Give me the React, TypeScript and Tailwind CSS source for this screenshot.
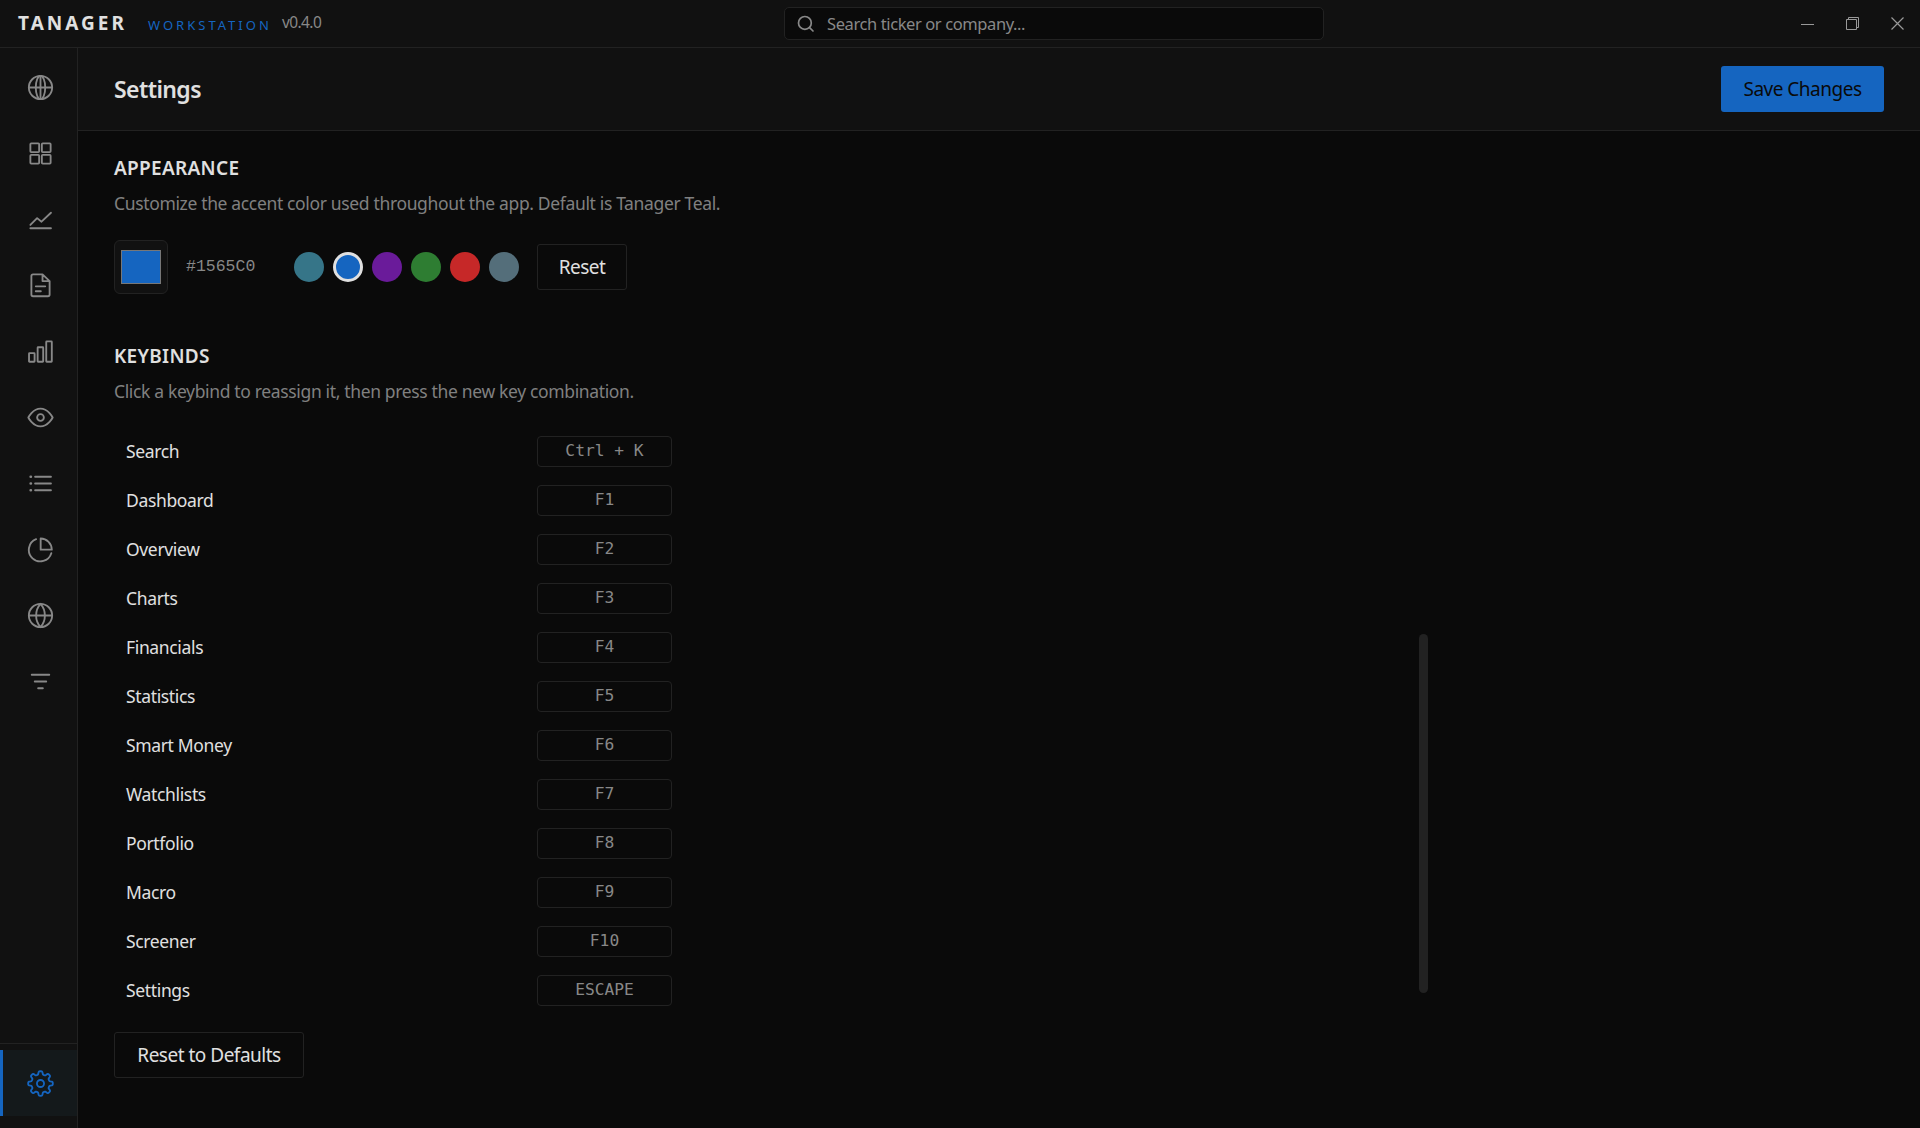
import { useState, type ReactNode } from 'react';

interface Keybind {
    action: string;
    keys: string;
}

const PRESETS = ['#367588', '#1565C0', '#6A1B9A', '#2E7D32', '#C62828', '#546E7A'];

const KEYBINDS: Keybind[] = [
    { action: 'Search', keys: 'Ctrl + K' },
    { action: 'Dashboard', keys: 'F1' },
    { action: 'Overview', keys: 'F2' },
    { action: 'Charts', keys: 'F3' },
    { action: 'Financials', keys: 'F4' },
    { action: 'Statistics', keys: 'F5' },
    { action: 'Smart Money', keys: 'F6' },
    { action: 'Watchlists', keys: 'F7' },
    { action: 'Portfolio', keys: 'F8' },
    { action: 'Macro', keys: 'F9' },
    { action: 'Screener', keys: 'F10' },
    { action: 'Settings', keys: 'ESCAPE' },
];

// Eight-toothed cog outline around (8, 8)
const gearPath = () => {
    const points: string[] = [];
    for (let i = 0; i < 144; i++) {
        const a = (i / 144) * Math.PI * 2;
        const wave = Math.tanh(2.2 * Math.cos(8 * a)) / Math.tanh(2.2);
        const r = 6.35 + 0.95 * wave;
        points.push(`${(8 + r * Math.sin(a)).toFixed(2)} ${(8 - r * Math.cos(a)).toFixed(2)}`);
    }
    return `M${points.join('L')}Z`;
};

const Icon = ({ children }: { children: ReactNode }) => (
    <svg
        viewBox="0 0 16 16"
        className="size-[27px] shrink-0"
        fill="none"
        stroke="currentColor"
        strokeWidth="1.1"
        strokeLinecap="round"
        strokeLinejoin="round"
    >
        {children}
    </svg>
);

const NAV: { id: string; icon: ReactNode }[] = [
    {
        id: 'dashboard',
        icon: (
            <>
                <circle cx="8" cy="8" r="6.9" />
                <ellipse cx="8" cy="8" rx="2.8" ry="6.9" />
                <path d="M8 1.1v13.8M1.1 8h13.8" />
            </>
        ),
    },
    {
        id: 'overview',
        icon: (
            <>
                <rect x="2" y="2" width="5.2" height="5.2" rx="0.5" />
                <rect x="8.8" y="2" width="5.2" height="5.2" rx="0.5" />
                <rect x="2" y="8.8" width="5.2" height="5.2" rx="0.5" />
                <rect x="8.8" y="8.8" width="5.2" height="5.2" rx="0.5" />
            </>
        ),
    },
    { id: 'charts', icon: <path d="M2 11.2l4-4 2.6 2.1L14.2 4M2 13.2h12.2" /> },
    {
        id: 'financials',
        icon: (
            <path d="M9.2 1.4H3.6a1 1 0 0 0-1 1v11a1 1 0 0 0 1 1h8.8a1 1 0 0 0 1-1V5.4zM9.2 1.4v4h4.2M5.2 8.5h5.6M5.2 11.4h3" />
        ),
    },
    {
        id: 'statistics',
        icon: (
            <>
                <rect x="1.2" y="9" width="3.3" height="5.1" rx="0.3" />
                <rect x="6.3" y="5.5" width="3.3" height="8.6" rx="0.3" />
                <rect x="11.4" y="2" width="3.3" height="12.1" rx="0.3" />
            </>
        ),
    },
    {
        id: 'smart-money',
        icon: (
            <>
                <path d="M.8 8S3.3 2.7 8 2.7 15.2 8 15.2 8 12.7 13.3 8 13.3.8 8 .8 8z" />
                <circle cx="8" cy="8" r="2" />
            </>
        ),
    },
    {
        id: 'watchlists',
        icon: (
            <>
                <path d="M4.8 4h9.4M4.8 8h9.4M4.8 12h9.4" />
                <path d="M2.2 4h.1M2.2 8h.1M2.2 12h.1" strokeWidth="1.6" />
            </>
        ),
    },
    {
        id: 'portfolio',
        icon: (
            <>
                <path d="M5.4 1.9A6.8 6.8 0 1 0 14.4 10.2" />
                <path d="M8.1 1.5a6.6 6.6 0 0 1 6.6 6.6H8.1z" />
            </>
        ),
    },
    {
        id: 'macro',
        icon: (
            <>
                <circle cx="8" cy="8" r="6.9" />
                <path d="M1.1 8h13.8M8 1.1c-1.8 2-2.6 4.4-2.6 6.9s.8 4.9 2.6 6.9c1.8-2 2.6-4.4 2.6-6.9S9.8 3.1 8 1.1z" />
            </>
        ),
    },
    { id: 'screener', icon: <path d="M2.8 4h10.4M4.6 8h6.8M6.6 12h2.8" /> },
];

const TitleBar = () => (
    <header className="h-12 shrink-0 flex items-center justify-between bg-[#111111] border-b border-[#222222]">
        <div className="w-[784px] pl-[18px] flex items-baseline">
            <span className="w-[130px] text-[19px] leading-[27px] font-bold tracking-[3px] text-[#e0e0e0]">TANAGER</span>
            <span className="w-[134px] text-[13px] leading-[20px] tracking-[3px] text-[#1565C0]">WORKSTATION</span>
            <span className="text-[15.5px] leading-[20px] tracking-[-0.6px] text-[#888888] relative -top-[2px]">v0.4.0</span>
        </div>
        <div className="w-[540px] h-[33px] px-3 flex items-center gap-3 bg-[#0a0a0a] border border-[#222222] rounded-[5px]">
            <svg viewBox="0 0 18 18" className="size-[18px] shrink-0 text-[#888888]" fill="none" stroke="currentColor" strokeWidth="1.7" strokeLinecap="round">
                <circle cx="7.9" cy="7.9" r="6.4" />
                <path d="M12.6 12.6l3.4 3.4" />
            </svg>
            <span className="text-[16.5px] leading-[24px] tracking-[-0.4px] text-[#888888]">Search ticker or company...</span>
        </div>
        <div className="flex-1 flex justify-end text-[#999999]">
            <button className="w-[45px] h-[47px] flex items-center justify-center">
                <svg viewBox="0 0 15 15" className="size-[15px]" fill="none" stroke="currentColor">
                    <path d="M1 8.5h13" />
                </svg>
            </button>
            <button className="w-[45px] h-[47px] flex items-center justify-center">
                <svg viewBox="0 0 15 15" className="size-[15px]" fill="none" stroke="currentColor">
                    <path d="M1.5 3.5h10v10h-10zM3.5 3.5v-2h10v10h-2" />
                </svg>
            </button>
            <button className="w-[45px] h-[47px] flex items-center justify-center">
                <svg viewBox="0 0 15 15" className="size-[15px]" fill="none" stroke="currentColor" strokeWidth="1.2">
                    <path d="M1.5 1.5l12 12M13.5 1.5l-12 12" />
                </svg>
            </button>
        </div>
    </header>
);

const Sidebar = () => (
    <nav className="w-[78px] shrink-0 flex flex-col justify-between bg-[#111111] border-r border-[#222222]">
        <div className="pt-1.5">
            {NAV.map(item => (
                <button key={item.id} className="w-full h-[66px] pl-1 pt-px flex items-center justify-center text-[#888888]">
                    <Icon>{item.icon}</Icon>
                </button>
            ))}
        </div>
        <div className="pt-1.5 pb-3 border-t border-[#222222]">
            <button className="w-full h-[66px] pl-px flex items-center justify-center bg-[#14191b] border-l-[3px] border-[#1565C0] text-[#1565C0]">
                <Icon>
                    <path d={gearPath()} />
                    <circle cx="8" cy="8" r="2.1" />
                </Icon>
            </button>
        </div>
    </nav>
);

const App = () => {
    const [accent, setAccent] = useState('#1565C0');

    return (
        <div className="h-screen flex flex-col overflow-hidden bg-[#0a0a0a] text-[#e0e0e0] font-['Noto_Sans',sans-serif]">
            <TitleBar />
            <div className="flex-1 min-h-0 flex">
                <Sidebar />
                <main className="flex-1 min-w-0 flex flex-col">
                    <div className="h-[83px] shrink-0 px-9 flex items-center justify-between bg-[#111111] border-b border-[#222222]">
                        <h1 className="text-[23px] leading-[32px] font-semibold tracking-[-0.6px]">Settings</h1>
                        <button className="w-[163px] h-[46px] rounded-[3px] bg-[#1565C0] text-[#0a0a0a] text-[19px] tracking-[-0.5px]">
                            Save Changes
                        </button>
                    </div>

                    <div className="flex-1 min-h-0 w-[1350px] flex">
                        <div className="flex-1 px-9 pt-6">
                            {/* Appearance */}
                            <section>
                                <h2 className="text-[19px] leading-[27px] font-semibold tracking-[0.3px]">APPEARANCE</h2>
                                <p className="mt-[9px] text-[17.5px] leading-[24px] tracking-[-0.35px] text-[#808080]">
                                    Customize the accent color used throughout the app. Default is Tanager Teal.
                                </p>
                                <div className="mt-[25px] flex items-center gap-[18px]">
                                    <div className="size-[54px] flex items-center justify-center bg-[#111111] border border-[#222222] rounded-md">
                                        <div className="w-10 h-[34px] border border-[#777777]" style={{ backgroundColor: accent }} />
                                    </div>
                                    <span className="w-[72px] font-['Liberation_Mono',monospace] text-[16.5px] text-[#888888]">{accent}</span>
                                    <div className="ml-[18px] flex gap-[9px]">
                                        {PRESETS.map(color => (
                                            <button
                                                key={color}
                                                onClick={() => setAccent(color)}
                                                className={`size-[30px] rounded-full ${color === accent ? 'border-[3px] border-[#e0e0e0]' : ''}`}
                                                style={{ backgroundColor: color }}
                                            />
                                        ))}
                                    </div>
                                    <button
                                        onClick={() => setAccent(PRESETS[0])}
                                        className="w-[90px] h-[46px] border border-[#222222] rounded-[3px] text-[19px] tracking-[-0.5px]"
                                    >
                                        Reset
                                    </button>
                                </div>
                            </section>

                            {/* Keybinds */}
                            <section className="mt-[49px]">
                                <h2 className="text-[19px] leading-[27px] font-semibold tracking-[0.3px]">KEYBINDS</h2>
                                <p className="mt-[9px] text-[17.5px] leading-[24px] tracking-[-0.35px] text-[#808080]">
                                    Click a keybind to reassign it, then press the new key combination.
                                </p>
                                <div className="mt-6 w-[570px]">
                                    {KEYBINDS.map(bind => (
                                        <div key={bind.action} className="h-[49px] px-3 flex items-center justify-between">
                                            <span className="pb-[2px] text-[17.5px] leading-[24px] tracking-[-0.35px]">{bind.action}</span>
                                            <button className="w-[135px] h-[31px] pb-[2px] border border-[#222222] rounded-[4px] font-['DejaVu_Sans_Mono',monospace] text-[16.25px] leading-[24px] text-[#888888]">
                                                {bind.keys}
                                            </button>
                                        </div>
                                    ))}
                                </div>
                                <button className="mt-[17px] w-[190px] h-[46px] border border-[#222222] rounded-[3px] text-[19px] tracking-[-0.5px]">
                                    Reset to Defaults
                                </button>
                            </section>
                        </div>

                        {/* Scroll thumb */}
                        <div className="w-[9px] shrink-0 pt-[503px]">
                            <div className="h-[359px] rounded-full bg-[#222222]" />
                        </div>
                    </div>
                </main>
            </div>
        </div>
    );
};

export default App;
